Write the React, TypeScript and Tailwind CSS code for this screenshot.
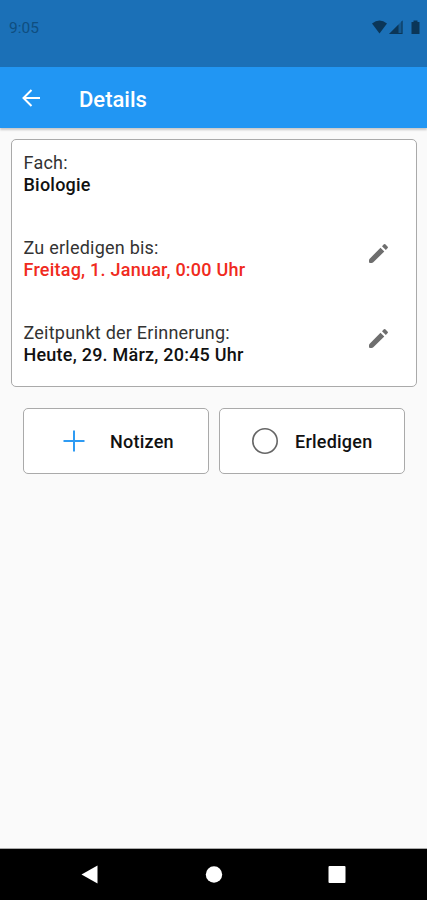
import type { ReactNode } from 'react';

function PencilIcon() {
  return (
    <svg viewBox="0 0 21 21" className="h-[21px] w-[21px] fill-[#6e6e6e]" aria-hidden>
      <path d="M12.500 4.700 16.300 8.500 5.300 19.300Q4.600 20 3.600 20H2.100Q1 20 1 18.900V17.400Q1 16.400 1.700 15.700Z" />
      <path d="M14 3.200 15.900 1.300Q16.600.7 17.300 1.300L19.700 3.700Q20.300 4.400 19.700 5.100L17.800 7Z" />
    </svg>
  );
}

function StatusBar() {
  return (
    <div className="flex h-[67px] items-start justify-between bg-[#1b70b7] pt-[18px] pr-[7px] pl-[9px] text-[#0f4e80]">
      <span className="text-[15.5px] leading-[20px]">9:05</span>
      <svg viewBox="0 0 50 16" className="mt-px h-4 w-[50px] fill-[#0b3658]" aria-hidden>
        <path d="M2 4.600Q9.500-1.600 17 4.600L9.500 14.500Z" />
        <path d="M19 15 32.500 1.500V15Z" fillOpacity=".4" />
        <path d="M19 15 28.500 5.500V15ZM31.500 2.500 32.500 1.500V15H28V14H31.500Z" />
        <path d="M41.500 3H43.500V1.500H47.500V3H49.500V15H41.500Z" />
      </svg>
    </div>
  );
}

function AppBar() {
  return (
    <header className="flex h-[61px] items-center bg-[#2196f3] pl-[22px] text-white shadow-[0_2px_2px_rgba(0,0,0,0.2)]">
      <svg viewBox="0 0 18 18" className="mt-px h-[18px] w-[18px]" fill="none" stroke="currentColor" strokeWidth="2" aria-hidden>
        <path d="M18 9H2M9.500 1 1.500 9 9.500 17" />
      </svg>
      <h1 className="ml-[39px] pt-[3px] text-[22px] font-medium">Details</h1>
    </header>
  );
}

interface DetailRowProps {
  label: string;
  value: string;
  overdue?: boolean;
  editable?: boolean;
}

function DetailRow({ label, value, overdue, editable }: DetailRowProps) {
  return (
    <div className="flex h-[85px] justify-between pr-[27px] pl-[11.5px] text-[18px] leading-[22px] tracking-[0.23px]">
      <div>
        <div className="text-[#333]">{label}</div>
        <div className={overdue ? 'font-medium text-[#f02a20]' : 'font-medium text-[#111]'}>{value}</div>
      </div>
      {editable && (
        <button className="mt-[6px] h-[21px]" aria-label="Bearbeiten">
          <PencilIcon />
        </button>
      )}
    </div>
  );
}

function ActionButton({ icon, children }: { icon: ReactNode; children: ReactNode }) {
  return (
    <button className="flex h-[66px] flex-1 items-center rounded-[5px] border border-[#aaa] bg-white text-[18px] font-medium tracking-[0.23px] text-[#111]">
      {icon}
      {children}
    </button>
  );
}

function NavBar() {
  return (
    <nav className="flex h-[52px] items-center border-t border-[#aaa] bg-black">
      <svg viewBox="0 0 427 51" className="h-[51px] w-full fill-white" aria-hidden>
        <path d="M81.500 25.500 97.500 16.500V34.500Z" />
        <circle cx="214" cy="25.500" r="8.200" />
        <rect x="328.500" y="17" width="17" height="17" rx="1" />
      </svg>
    </nav>
  );
}

export default function App() {
  return (
    <div className="flex h-[900px] w-[427px] flex-col bg-[#fafafa] font-[Roboto,sans-serif]">
      <StatusBar />
      <AppBar />
      <main className="flex-1 pt-[11px]">
        <section className="mr-[10px] ml-[11px] h-[248px] rounded-[5px] border border-[#aaa] bg-white pt-[12px]">
          <DetailRow label="Fach:" value="Biologie" />
          <DetailRow label="Zu erledigen bis:" value="Freitag, 1. Januar, 0:00 Uhr" overdue editable />
          <DetailRow label="Zeitpunkt der Erinnerung:" value="Heute, 29. März, 20:45 Uhr" editable />
        </section>
        <div className="mt-[21px] mr-[22px] ml-[23px] flex gap-[10px]">
          <ActionButton
            icon={
              <svg viewBox="0 0 22 22" className="mr-[25px] ml-[39px] h-[22px] w-[22px] stroke-[#2e9bf3]" strokeWidth="2" aria-hidden>
                <path d="M11 .5V21.500M.5 11H21.500" />
              </svg>
            }
          >
            Notizen
          </ActionButton>
          <ActionButton
            icon={
              <svg viewBox="0 0 28 28" className="mr-[16px] ml-[31px] h-7 w-7 fill-none stroke-[#666]" strokeWidth="1.600" aria-hidden>
                <circle cx="14" cy="14" r="12.200" />
              </svg>
            }
          >
            Erledigen
          </ActionButton>
        </div>
      </main>
      <NavBar />
    </div>
  );
}
